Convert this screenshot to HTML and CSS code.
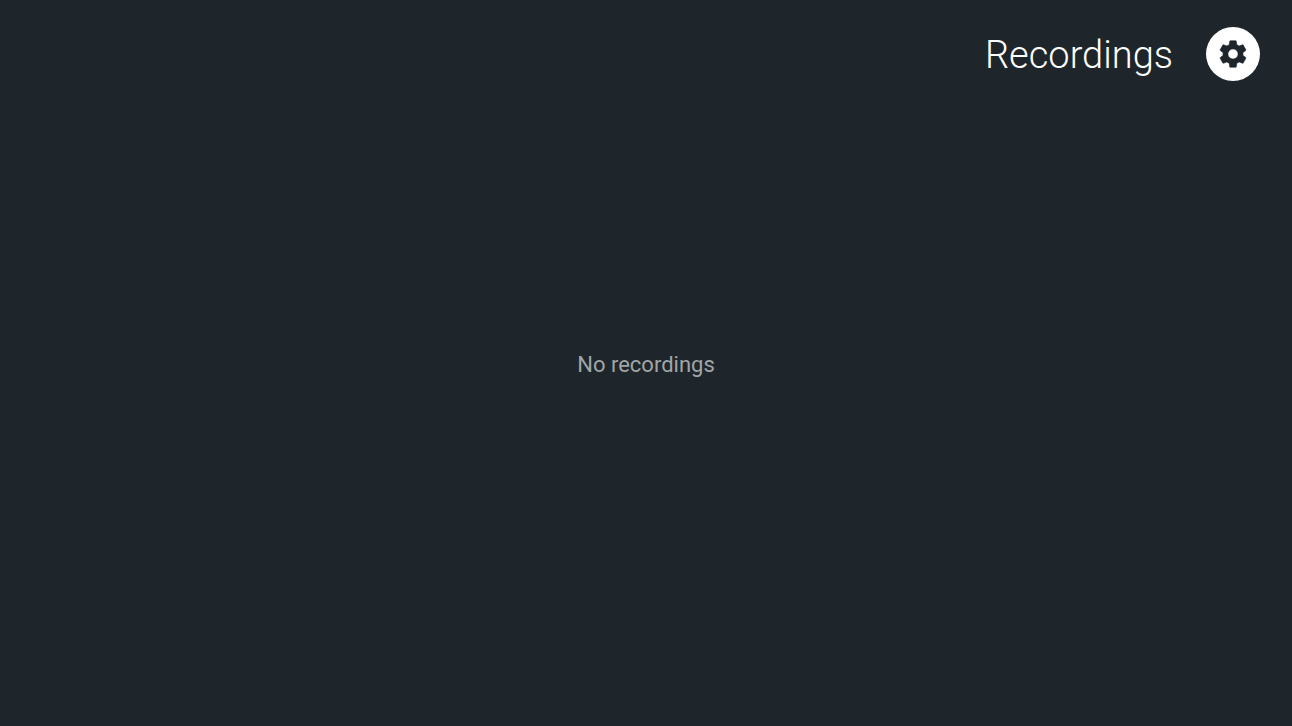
FILE: index.html
```html
<!DOCTYPE html>
<html lang="en">
<head>
  <meta charset="UTF-8">
  <meta name="viewport" content="width=device-width, initial-scale=1">
  <title>Recordings</title>
  <link rel="stylesheet" href="styles.css">
</head>
<body>
  <header class="title-bar">
    <h1 class="title">Recordings</h1>
    <button class="settings-button" type="button" aria-label="Settings">
      <svg class="settings-icon" viewBox="0 0 24 24" aria-hidden="true">
        <path d="M19.43 12.98c.04-.32.07-.64.07-.98s-.03-.66-.07-.98l2.11-1.65c.19-.15.24-.42.12-.64l-2-3.46c-.12-.22-.39-.3-.61-.22l-2.49 1c-.52-.4-1.08-.73-1.69-.98l-.38-2.65C14.46 2.18 14.25 2 14 2h-4c-.25 0-.46.18-.49.42l-.38 2.65c-.61.25-1.17.59-1.69.98l-2.49-1c-.23-.09-.49 0-.61.22l-2 3.46c-.13.22-.07.49.12.64l2.11 1.65c-.04.32-.07.65-.07.98s.03.66.07.98l-2.11 1.65c-.19.15-.24.42-.12.64l2 3.46c.12.22.39.3.61.22l2.49-1c.52.4 1.08.73 1.69.98l.38 2.65c.03.24.24.42.49.42h4c.25 0 .46-.18.49-.42l.38-2.65c.61-.25 1.17-.59 1.69-.98l2.49 1c.23.09.49 0 .61-.22l2-3.46c.12-.22.07-.49-.12-.64l-2.11-1.65zM12 15.8a3.8 3.8 0 1 1 0-7.6 3.8 3.8 0 0 1 0 7.6z"/>
      </svg>
    </button>
  </header>

  <main class="content">
    <p class="empty-message">No recordings</p>
  </main>
</body>
</html>
```
FILE: styles.css
```css
* {
  box-sizing: border-box;
  margin: 0;
  padding: 0;
}

body {
  display: grid;
  min-height: 100vh;
  background-color: #1e262b;
  color: #fff;
  font-family: Roboto, sans-serif;
}

/* The header and the message share one cell, so the message centers on the page */
.title-bar,
.content {
  grid-area: 1 / 1;
}

.title-bar {
  display: flex;
  align-self: start;
  align-items: center;
  justify-content: flex-end;
  gap: 33px;
  padding: 27px 32px;
}

.title {
  padding-top: 2px;
  font-size: 38px;
  font-weight: 300;
  line-height: 52px;
}

.settings-button {
  display: flex;
  align-items: center;
  justify-content: center;
  width: 54px;
  height: 54px;
  border: none;
  border-radius: 50%;
  background-color: #fff;
  color: #1e262b;
  cursor: pointer;
}

.settings-icon {
  width: 32px;
  height: 32px;
  fill: currentColor;
  stroke: currentColor;
  stroke-width: 0.4;
}

.content {
  align-self: center;
  justify-self: center;
  padding-top: 4px;
}

.empty-message {
  color: #a2a5a6;
  font-size: 22px;
  line-height: 32px;
}
```
